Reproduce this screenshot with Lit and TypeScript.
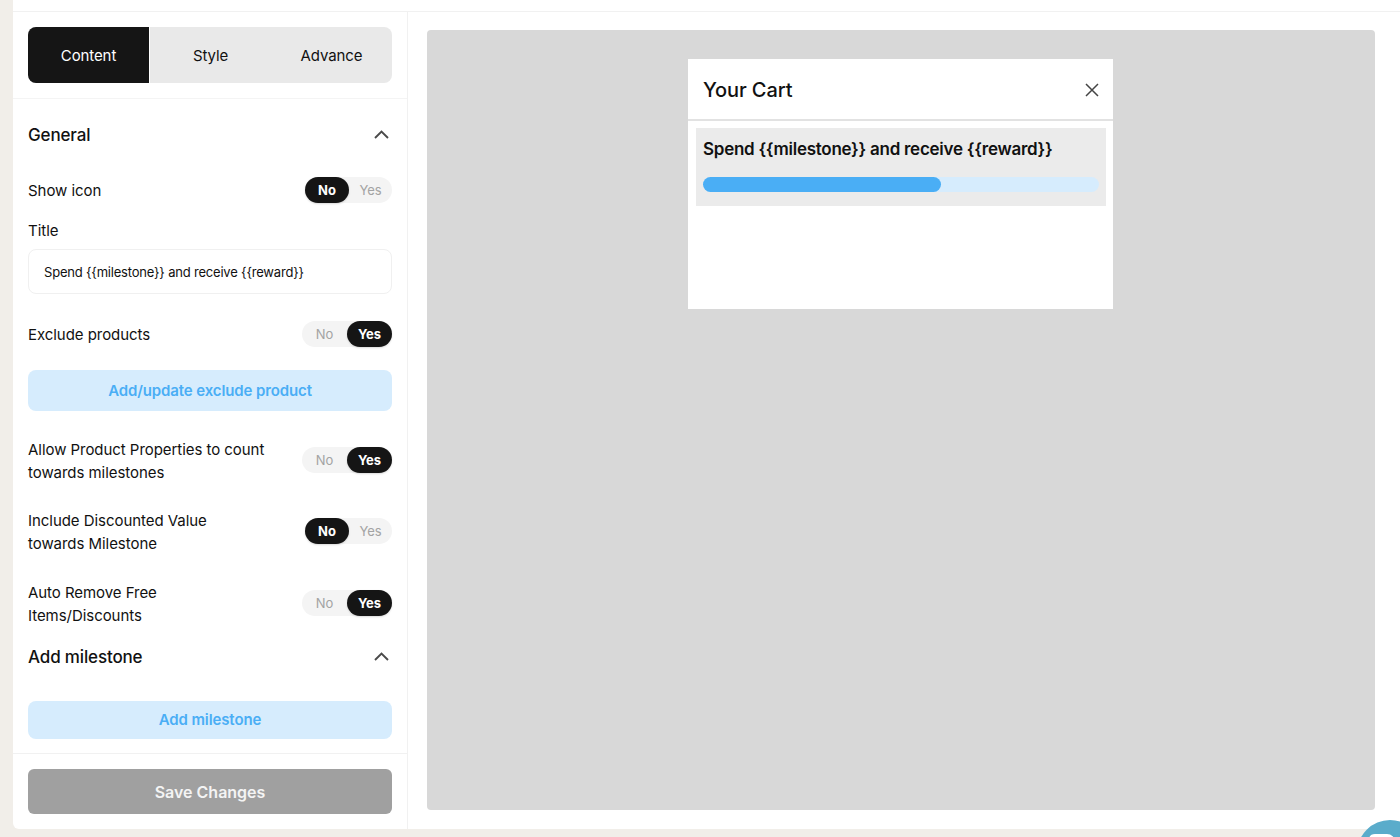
import { LitElement, html, css } from 'lit';
import { customElement, property } from 'lit/decorators.js';

const chevron = html`<svg class="chev" width="18" height="18" viewBox="0 0 18 18" fill="none"><path d="M3 12 9.5 5.5 16 12" stroke="#4a4a4a" stroke-width="1.9"/></svg>`;

@customElement('yes-no')
export class YesNo extends LitElement {
  @property({ type: Boolean }) yes = false;

  static styles = css`
    :host {
      display: inline-flex;
      flex: none;
      align-items: center;
      height: 26px;
      margin-bottom: 1px;
      border-radius: 13px;
      background: #f4f4f4;
      font-size: 13px;
      color: #a3a3a3;
    }
    span {
      height: 26px;
      line-height: 26px;
      text-align: center;
    }
    .off { width: 43px; }
    .on {
      width: 44px;
      border-radius: 13px;
      background: #151515;
      color: #fff;
      font-weight: 700;
      box-shadow: 0 1px 2px rgba(0, 0, 0, 0.15);
    }
    .wide { width: 45px; }
    .lead { width: 45px; }
  `;

  render() {
    return this.yes
      ? html`<span class="off lead">No</span><span class="on wide">Yes</span>`
      : html`<span class="on">No</span><span class="off">Yes</span>`;
  }
}

@customElement('app-root')
export class AppRoot extends LitElement {
  static styles = css`
    :host {
      display: block;
      height: 837px;
      overflow: hidden;
      position: relative;
      background: #f1eee9;
      font-family: Inter, 'Liberation Sans', sans-serif;
      color: #111;
    }
    .card {
      margin-left: 13px;
      height: 829px;
      background: #fff;
      border-bottom-left-radius: 6px;
      display: flex;
      flex-direction: column;
    }
    .strip {
      height: 11px;
      flex: none;
      border-bottom: 1px solid #f1f1f1;
    }
    .main {
      flex: 1;
      display: flex;
      min-height: 0;
    }
    .panel {
      width: 394px;
      flex: none;
      border-right: 1px solid #f1f1f1;
      display: flex;
      flex-direction: column;
    }
    .tabs-wrap {
      padding: 15px 15px 15px;
      border-bottom: 1px solid #f4f4f4;
    }
    .tabs {
      display: flex;
      height: 56px;
      border-radius: 8px;
      background: #e9e9e9;
      overflow: hidden;
      font-size: 15px;
      letter-spacing: -0.1px;
    }
    .tab {
      flex: 1;
      display: flex;
      align-items: center;
      justify-content: center;
    }
    .tab.active {
      background: #151515;
      color: #fff;
      border-right: 1px solid #fff;
    }
    .body {
      padding: 0 15px;
      display: flex;
      flex-direction: column;
    }
    .heading {
      display: flex;
      justify-content: space-between;
      align-items: center;
      height: 24px;
      font-size: 17px;
      font-weight: 500;
      letter-spacing: -0.15px;
    }
    .chev { margin-right: 2px; }
    .row {
      display: flex;
      justify-content: space-between;
      align-items: center;
      font-size: 15px;
      line-height: 22.5px;
      letter-spacing: -0.05px;
    }
    .row > span {
      padding-top: 1px;
      margin-bottom: -1px;
    }
    .label {
      font-size: 15px;
      line-height: 20px;
    }
    .input {
      height: 43px;
      border: 1px solid #f0f0f0;
      border-radius: 8px;
      padding-left: 15px;
      display: flex;
      align-items: center;
      font-size: 13px;
      letter-spacing: -0.2px;
    }
    .soft-btn {
      border-radius: 8px;
      background: #d6ecfd;
      color: #4aaef5;
      font-size: 15px;
      font-weight: 600;
      letter-spacing: -0.12px;
      display: flex;
      align-items: center;
      justify-content: center;
    }
    .footer {
      margin-top: 14.5px;
      padding: 15px 15px 15px;
      border-top: 1px solid #f1f1f1;
    }
    .save {
      height: 45px;
      border-radius: 6px;
      background: #a0a0a0;
      color: #f4f4f4;
      font-size: 16px;
      font-weight: 600;
      display: flex;
      align-items: center;
      justify-content: center;
    }
    .preview {
      flex: 1;
      padding: 18px 25px 19px 19px;
      min-width: 0;
    }
    .stage {
      height: 100%;
      box-sizing: border-box;
      padding: 29px 1px 0 0;
      background: #d8d8d8;
      border-radius: 4px;
    }
    .cart {
      width: 425px;
      height: 250px;
      margin: 0 auto;
      background: #fff;
    }
    .cart-head {
      height: 58px;
      padding: 2px 14px 0 15px;
      border-bottom: 2px solid #e2e2e2;
      display: flex;
      justify-content: space-between;
      align-items: center;
      font-size: 20px;
      font-weight: 500;
      letter-spacing: -0.1px;
    }
    .bar-box {
      margin: 7px 7px 0 8px;
      height: 78px;
      box-sizing: border-box;
      padding: 9px 7px 0;
      background: #ebebeb;
    }
    .bar-title {
      font-size: 17px;
      line-height: 24px;
      font-weight: 600;
      letter-spacing: -0.27px;
    }
    .bar {
      margin-top: 16px;
      height: 15px;
      border-radius: 8px;
      background: #d6ecfd;
    }
    .bar div {
      height: 100%;
      border-radius: 8px;
      background: #4aaef5;
    }
    .bubble {
      position: absolute;
      left: 1357px;
      top: 820px;
      width: 66px;
      height: 66px;
      border-radius: 50%;
      background: #5aaccb;
      overflow: hidden;
    }
    .bubble svg { display: block; }
  `;

  render() {
    return html`
      <div class="card">
        <div class="strip"></div>
        <div class="main">
          <div class="panel">
            <div class="tabs-wrap">
              <div class="tabs">
                <div class="tab active">Content</div>
                <div class="tab">Style</div>
                <div class="tab">Advance</div>
              </div>
            </div>
            <div class="body">
              <div class="heading" style="margin-top:24px">General ${chevron}</div>
              <div class="row" style="margin-top:30px"><span>Show icon</span> <yes-no></yes-no></div>
              <div class="label" style="margin-top:17px">Title</div>
              <div class="input" style="margin-top:8px">Spend {{milestone}} and receive {{reward}}</div>
              <div class="row" style="margin-top:27px"><span>Exclude products</span> <yes-no yes></yes-no></div>
              <div class="soft-btn" style="margin-top:22px;height:41px">Add/update exclude product</div>
              <div class="row" style="margin-top:27px">
                <span>Allow Product Properties to count<br />towards milestones</span>
                <yes-no yes></yes-no>
              </div>
              <div class="row" style="margin-top:26px">
                <span>Include Discounted Value<br />towards Milestone</span>
                <yes-no></yes-no>
              </div>
              <div class="row" style="margin-top:27px">
                <span>Auto Remove Free<br />Items/Discounts</span>
                <yes-no yes></yes-no>
              </div>
              <div class="heading" style="margin-top:19px">Add milestone ${chevron}</div>
              <div class="soft-btn" style="margin-top:31.5px;height:38px">Add milestone</div>
            </div>
            <div class="footer"><div class="save">Save Changes</div></div>
          </div>
          <div class="preview">
            <div class="stage">
              <div class="cart">
                <div class="cart-head">
                  <span>Your Cart</span>
                  <svg width="14" height="14" viewBox="0 0 14 14" fill="none"><path d="M1 1l12 12M13 1 1 13" stroke="#444" stroke-width="1.5"/></svg>
                </div>
                <div class="bar-box">
                  <div class="bar-title">Spend {{milestone}} and receive {{reward}}</div>
                  <div class="bar"><div style="width:60%"></div></div>
                </div>
              </div>
            </div>
          </div>
        </div>
      </div>
      <div class="bubble">
        <svg width="66" height="66" viewBox="0 0 66 66"><path d="M12 20q0-6 6-6h12a8 8 0 0 1 8 8v30H12z" fill="#fff"/></svg>
      </div>
    `;
  }
}
